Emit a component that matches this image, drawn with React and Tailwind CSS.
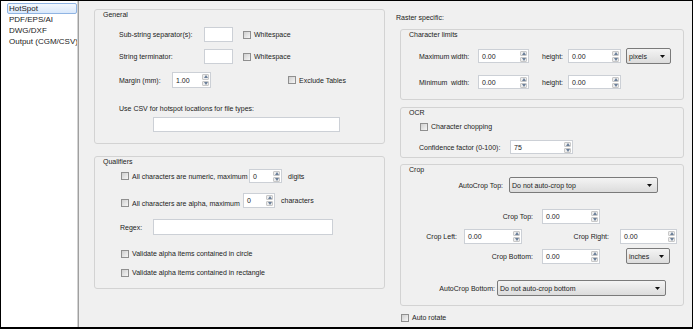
import React from 'react';

// small win-style widgets
const Check = ({ label, className = '' }) => (
  <div className={`flex items-center h-[9px] ${className}`}>
    <span className="w-[8px] h-[8px] shrink-0 border border-[#8f8f8f] bg-linear-to-br from-[#cfcfcf] to-[#f6f6f6]" />
    {label && <span className="ml-[3px] whitespace-nowrap">{label}</span>}
  </div>
);

const Text = ({ className = '' }) => (
  <div className={`shrink-0 bg-white border border-[#ccd0d6] ${className}`} />
);

const Arrow = ({ up }) => (
  <svg width="4" height="3" viewBox="0 0 4 3">
    <path d={up ? 'M0 3 L2 0 L4 3 Z' : 'M0 0 L2 3 L4 0 Z'} fill="#6b7f99" />
  </svg>
);

const Spin = ({ value, className = '' }) => (
  <div className={`shrink-0 flex bg-white border border-[#ccd0d6] ${className}`}>
    <div className="flex-1 pl-[3px] flex items-center">{value}</div>
    <div className="w-[8px] flex flex-col gap-px py-px pr-px">
      <div className="flex-1 flex items-center justify-center bg-[#ededed] border border-[#c8c8c8] rounded-[1px]">
        <Arrow up />
      </div>
      <div className="flex-1 flex items-center justify-center bg-[#ededed] border border-[#c8c8c8] rounded-[1px]">
        <Arrow />
      </div>
    </div>
  </div>
);

const Combo = ({ value, className = '' }) => (
  <div className={`shrink-0 flex items-center justify-between pl-[2px] pr-[5px] border border-[#7a7a7a] rounded-[2px] bg-linear-to-b from-[#f4f4f4] to-[#dcdcdc] ${className}`}>
    <span className="whitespace-nowrap">{value}</span>
    <svg width="5" height="3" viewBox="0 0 5 3">
      <path d="M0 0 L5 0 L2.5 3 Z" fill="#111" />
    </svg>
  </div>
);

const Group = ({ title, className = '', children }) => (
  <div className={`flex flex-col border border-[#d3d3d3] rounded-[3px] ${className}`}>
    <div className="h-[10px] leading-[10px] pl-[8px]">{title}</div>
    {children}
  </div>
);

const navItems = ['HotSpot', 'PDF/EPS/AI', 'DWG/DXF', 'Output (CGM/CSV)'];

export default function App() {
  return (
    <div className="w-[693px] h-[329px] flex border-t border-l border-r border-b-2 border-black bg-[#f0f0f0] text-[7px] leading-[9px] text-[#222] font-['Liberation_Sans',Arial,sans-serif] overflow-hidden">
      {/* left list */}
      <div className="w-[76px] bg-white pl-[6px] pt-[2px] text-[8px]">
        {navItems.map((item, i) => (
          <div
            key={item}
            className={`h-[11px] leading-[9px] pl-px whitespace-nowrap border rounded-[2px] ${i === 0 ? 'border-[#8fb4e3] bg-linear-to-b from-[#f3f8fe] to-[#d9e8fb]' : 'border-transparent'}`}
          >
            {item}
          </div>
        ))}
      </div>
      <div className="w-px bg-[#d2d2d2]" />
      <div className="w-px bg-[#a0a0a0]" />

      {/* main */}
      <div className="flex-1 flex pl-[15px] pt-[8px]">
        {/* left column */}
        <div className="w-[291px] flex flex-col">
          <Group title="General" className="h-[135px]">
            <div className="mt-[7px] flex items-center pl-[24px]">
              <span className="w-[85px]">Sub-string separator(s):</span>
              <Text className="w-[29px] h-[15px]" />
              <Check label="Whitespace" className="ml-[10px]" />
            </div>
            <div className="mt-[7px] flex items-center pl-[24px]">
              <span className="w-[85px]">String terminator:</span>
              <Text className="w-[29px] h-[15px]" />
              <Check label="Whitespace" className="ml-[10px]" />
            </div>
            <div className="mt-[8px] flex items-center pl-[24px]">
              <span className="w-[53px]">Margin (mm):</span>
              <Spin value="1.00" className="w-[39px] h-[16px]" />
              <Check label="Exclude Tables" className="ml-[77px]" />
            </div>
            <div className="mt-[16px] pl-[24px]">Use CSV for hotspot locations for file types:</div>
            <div className="mt-[4px] pl-[58px]">
              <Text className="w-[187px] h-[15px]" />
            </div>
          </Group>

          <Group title="Qualifiers" className="mt-[12px] h-[133px]">
            <div className="mt-[2px] flex items-center pl-[26px]">
              <Check />
              <span className="ml-[3px] w-[117px] whitespace-nowrap">All characters are numeric, maximum</span>
              <Spin value="0" className="w-[33px] h-[14px]" />
              <span className="ml-[6px]">digits</span>
            </div>
            <div className="mt-[10px] flex items-center pl-[26px]">
              <Check className="mt-[5px]" />
              <span className="ml-[3px] mt-[5px] w-[111px] whitespace-nowrap">All characters are alpha, maximum</span>
              <Spin value="0" className="w-[32px] h-[15px]" />
              <span className="ml-[6px]">characters</span>
            </div>
            <div className="mt-[11px] flex items-center pl-[25px]">
              <span className="w-[33px]">Regex:</span>
              <Text className="w-[180px] h-[16px]" />
            </div>
            <Check label="Validate alpha items contained in circle" className="mt-[14px] ml-[26px]" />
            <Check label="Validate alpha items contained in rectangle" className="mt-[10px] ml-[26px]" />
          </Group>
        </div>

        {/* right column */}
        <div className="flex flex-col">
          <div className="mt-[4px] h-[9px] pl-[11px]">Raster specific:</div>

          <Group title="Character limits" className="mt-[7px] ml-[15px] w-[284px] h-[71px]">
            <div className="mt-[8px] h-[16px] flex items-center pl-[18px]">
              <span className="w-[32px] shrink-0 whitespace-nowrap">Maximum</span>
              <span className="w-[27px] shrink-0">width:</span>
              <Spin value="0.00" className="w-[51px] h-[14px]" />
              <span className="ml-[13px] w-[26px] shrink-0">height:</span>
              <Spin value="0.00" className="w-[53px] h-[14px]" />
              <Combo value="pixels" className="ml-[5px] w-[45px] h-[16px]" />
            </div>
            <div className="mt-[10px] h-[16px] flex items-center pl-[18px]">
              <span className="w-[32px] shrink-0 whitespace-nowrap">Minimum</span>
              <span className="w-[27px] shrink-0">width:</span>
              <Spin value="0.00" className="w-[51px] h-[14px]" />
              <span className="ml-[13px] w-[26px] shrink-0">height:</span>
              <Spin value="0.00" className="w-[53px] h-[14px]" />
            </div>
          </Group>

          <Group title="OCR" className="mt-[7px] ml-[15px] w-[284px] h-[51px]">
            <Check label="Character chopping" className="mt-[4px] ml-[19px]" />
            <div className="mt-[9px] flex items-center pl-[18px]">
              <span className="w-[91px]">Confidence factor (0-100):</span>
              <Spin value="75" className="w-[63px] h-[14px]" />
            </div>
          </Group>

          <Group title="Crop" className="mt-[6px] ml-[15px] w-[284px] h-[142px]">
            <div className="mt-[2px] flex items-center">
              <span className="w-[102px] text-right">AutoCrop Top:</span>
              <Combo value="Do not auto-crop top" className="ml-[6px] w-[149px] h-[16px]" />
            </div>
            <div className="mt-[16px] flex items-center">
              <span className="w-[132px] text-right">Crop Top:</span>
              <Spin value="0.00" className="ml-[9px] w-[58px] h-[15px]" />
            </div>
            <div className="mt-[5px] flex items-center">
              <span className="w-[56px] text-right">Crop Left:</span>
              <Spin value="0.00" className="ml-[7px] w-[58px] h-[15px]" />
              <span className="w-[87px] text-right">Crop Right:</span>
              <Spin value="0.00" className="ml-[11px] w-[57px] h-[15px]" />
            </div>
            <div className="mt-[4px] flex items-center">
              <span className="w-[132px] text-right">Crop Bottom:</span>
              <Spin value="0.00" className="ml-[9px] w-[58px] h-[15px]" />
              <Combo value="inches" className="ml-[26px] w-[44px] h-[16px]" />
            </div>
            <div className="mt-[16px] flex items-center">
              <span className="w-[94px] text-right">AutoCrop Bottom:</span>
              <Combo value="Do not auto-crop bottom" className="ml-[2px] w-[169px] h-[16px]" />
            </div>
          </Group>

          <Check label="Auto rotate" className="mt-[7px] ml-[16px]" />
        </div>
      </div>
    </div>
  );
}
